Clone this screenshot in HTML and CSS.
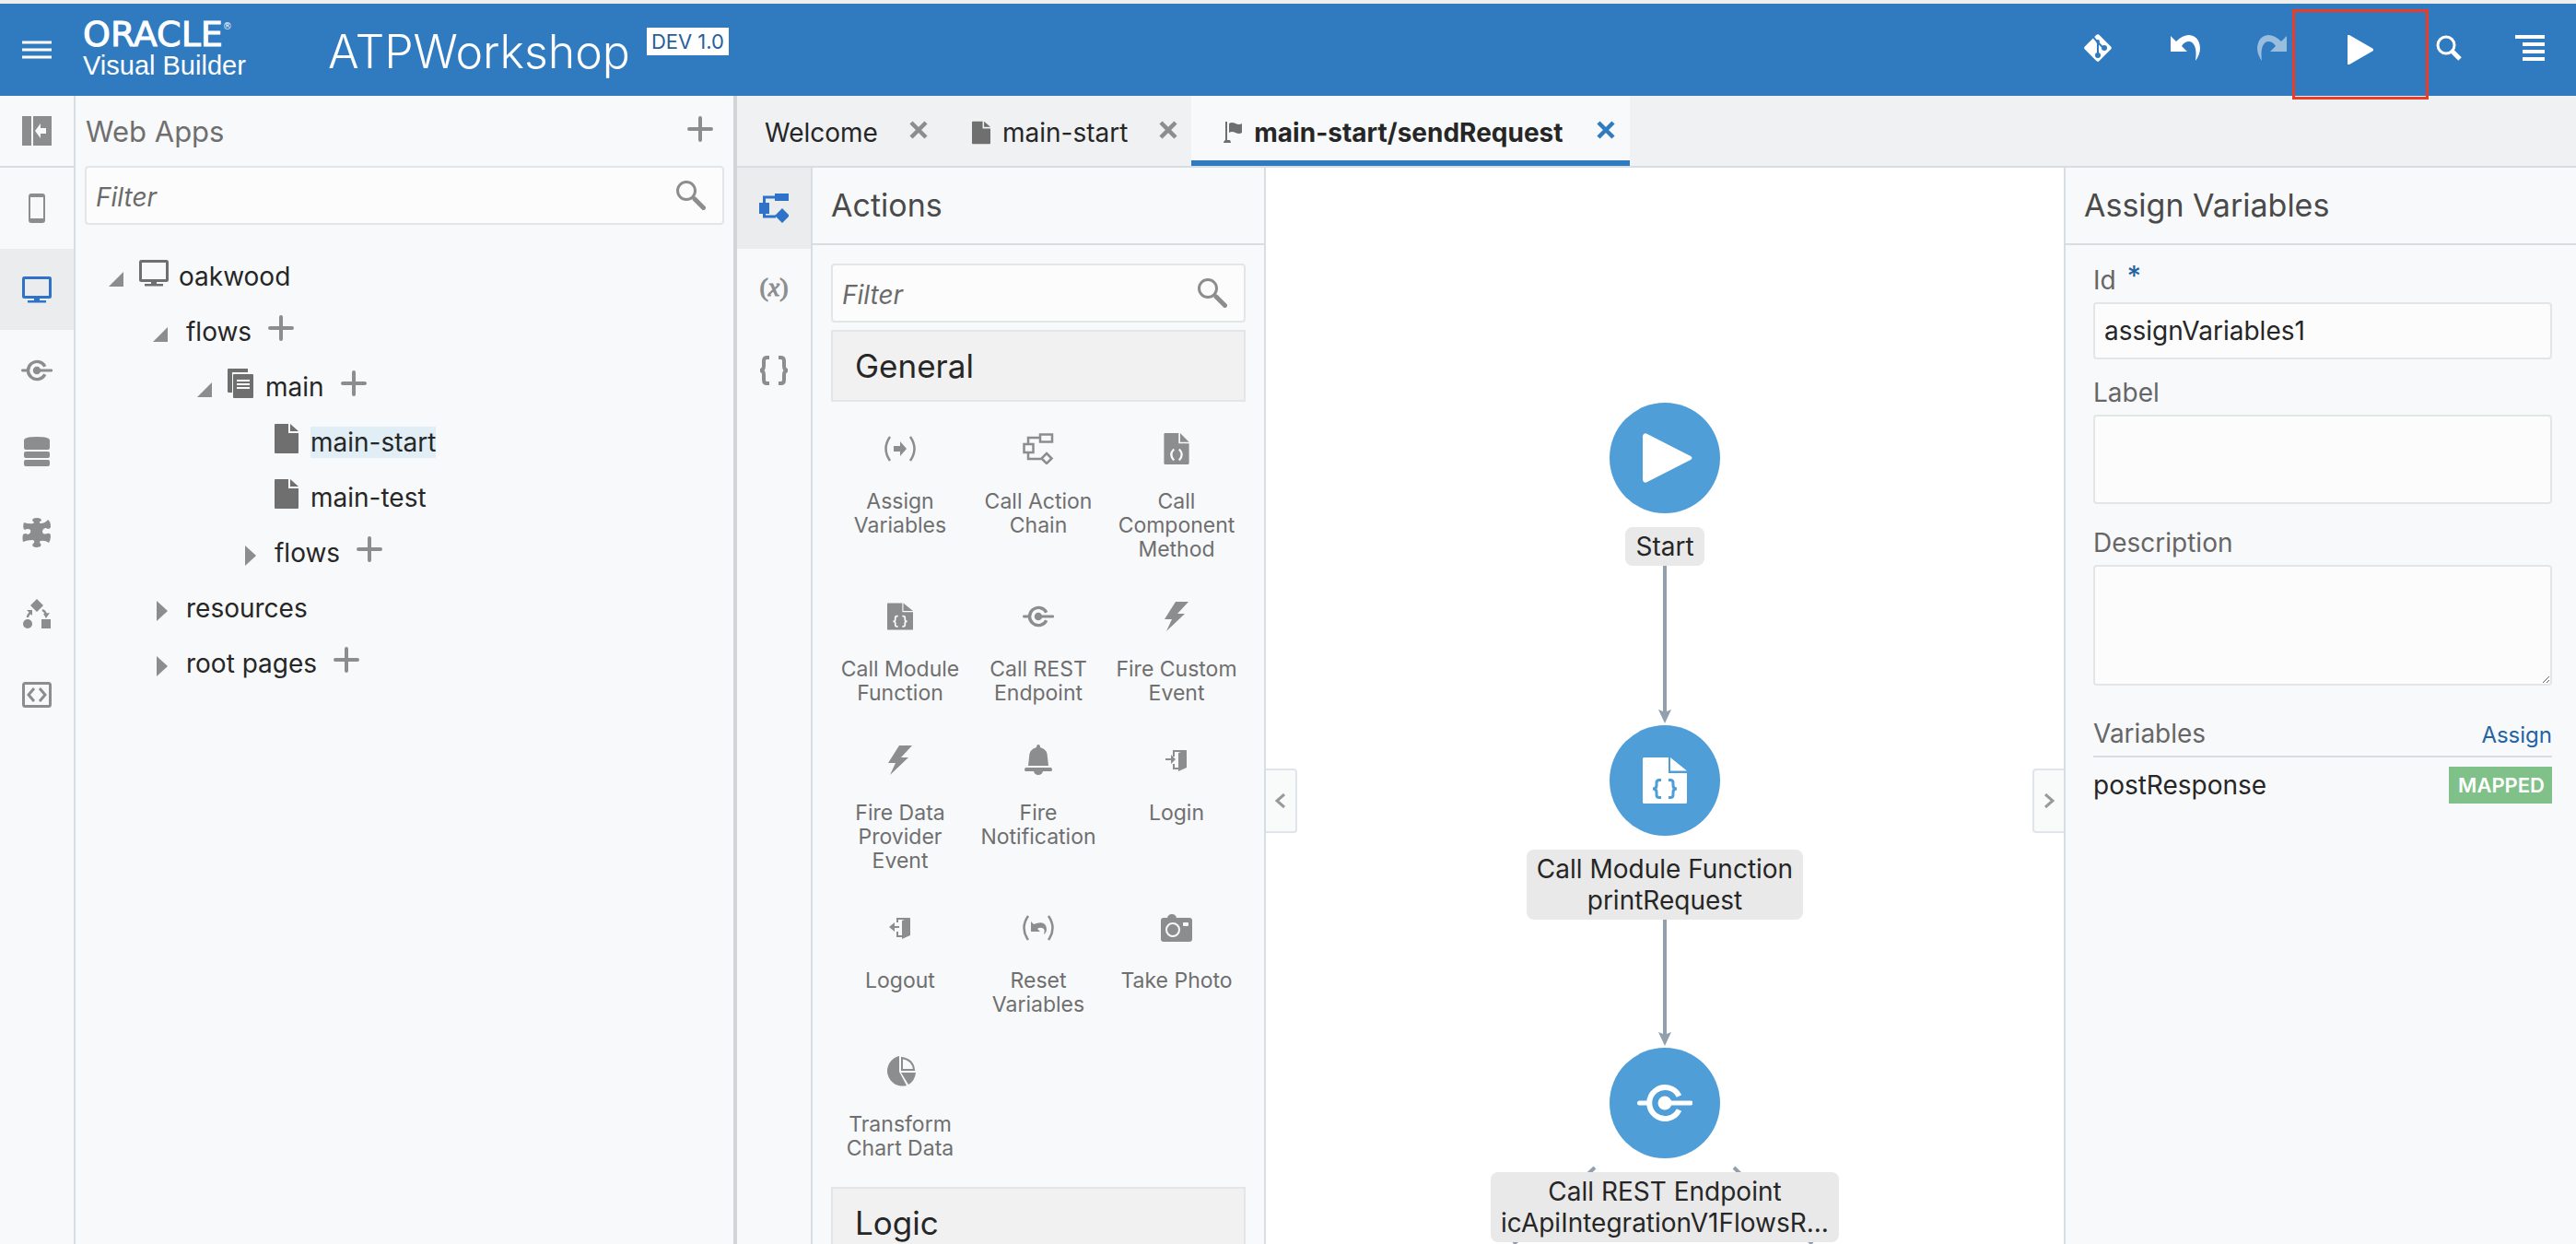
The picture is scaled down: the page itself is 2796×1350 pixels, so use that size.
FILE: index.html
```html
<!DOCTYPE html>
<html lang="en">
<head>
<meta charset="utf-8">
<title>Oracle Visual Builder - ATPWorkshop</title>
<link rel="stylesheet" href="styles.css">
</head>
<body>
<svg class="sprite" aria-hidden="true">
  <symbol id="i-plus" viewBox="0 0 28 28"><path d="M14 2v24M2 14h24" fill="none" stroke="currentColor" stroke-width="4" stroke-linecap="round"/></symbol>
  <symbol id="i-search" viewBox="0 0 32 32"><circle cx="11" cy="11" r="9.5" fill="none" stroke="currentColor" stroke-width="3"/><path d="M20 20l9.500 9.500" stroke="currentColor" stroke-width="5" stroke-linecap="round"/></symbol>
  <symbol id="i-close" viewBox="0 0 20 20"><path d="M2 2l16 16M18 2L2 18" fill="none" stroke="currentColor" stroke-width="4.500"/></symbol>
  <symbol id="i-monitor" viewBox="0 0 32 32"><rect x="1.500" y="3.500" width="29" height="21" rx="1" fill="none" stroke="currentColor" stroke-width="3"/><path d="M13 25h6v3h7v2.500H6V28h7z" fill="currentColor"/></symbol>
  <symbol id="i-endpoint" viewBox="0 0 60 60"><path d="M45.500 22.500A17 17 0 1 0 45.500 37.500" fill="none" stroke="currentColor" stroke-width="6"/><circle cx="30" cy="30" r="7.500" fill="currentColor"/><path d="M32 30h26M2.500 30h10" stroke="currentColor" stroke-width="5" stroke-linecap="round"/></symbol>
  <symbol id="i-page" viewBox="0 0 26 32"><path fill="currentColor" d="M1 0h14v10h11v21q0 1-1 1H1q-1 0-1-1V1q0-1 1-1zM17 0l9 8h-9z"/></symbol>
  <symbol id="i-flow" viewBox="0 0 28 32"><path fill="currentColor" d="M1 0h21v4H5v22H1q-1 0-1-1V1q0-1 1-1zM7 6h20q1 0 1 1v24q0 1-1 1H7q-1 0-1-1V7q0-1 1-1zm3 6v2h14v-2zm0 4v2h14v-2zm0 4v2h14v-2z" fill-rule="evenodd"/></symbol>
  <symbol id="i-braces-page" viewBox="0 0 48 50"><path fill="currentColor" d="M1.500 0H28v17h20v31.500q0 1.500-1.500 1.500h-45Q0 50 0 48.500v-47Q0 0 1.500 0zM30 0l18 14.500H30z"/><path fill="none" stroke="var(--cut)" stroke-width="3" d="M20 24.500h-2q-3 0-3 3v3q0 3.500-4 3.500q4 0 4 3.500v3q0 3 3 3h2M28 24.500h2q3 0 3 3v3q0 3.500 4 3.500q-4 0-4 3.500v3q0 3-3 3h-2"/></symbol>
  <symbol id="i-parens-page" viewBox="0 0 48 60"><path fill="currentColor" d="M2 0h26v20h20v38q0 2-2 2H2q-2 0-2-2V2q0-2 2-2zM31 0l17 17H31z"/><path fill="none" stroke="var(--cut)" stroke-width="4" d="M19 31q-10 10 0 21M29 31q10 10 0 21"/></symbol>
  <symbol id="i-bolt" viewBox="0 0 26 32"><path fill="currentColor" d="M12 0h14L14 13h8L2 32l6-13H0z"/></symbol>
  <symbol id="i-flag" viewBox="0 0 20 24"><path fill="currentColor" d="M2 0h2v20h3q1 2 1 3H0q0-2 2-3zM6 2q3-2 7 0t7 0v10q-3 2-7 0t-7 0z"/></symbol>
  <symbol id="i-undo" viewBox="0 0 32 28"><path fill="currentColor" d="M0 1l6 6Q13 0 20 0Q31 1 32 14Q32 21 27 28Q28 20 27 15Q25 7 20 7Q15 7 12 12l6 6H0z"/></symbol>
</svg>

<header class="topbar">
  <button class="icon-btn menu-btn" aria-label="Menu"><svg width="32" height="20"><path d="M0 2h32M0 10h32M0 18h32" stroke="#fff" stroke-width="3"/></svg></button>
  <div class="brand"><div class="oracle">ORACLE<sup>®</sup></div><div class="product">Visual Builder</div></div>
  <h1 class="app-name">ATPWorkshop</h1>
  <span class="version">DEV 1.0</span>
  <nav class="tools">
    <button class="icon-btn" aria-label="Git"><svg width="34" height="34" viewBox="0 0 34 34"><rect x="6" y="6" width="22" height="22" rx="2" fill="#fff" transform="rotate(45 17 17)"/><path d="M11 4l6 7v13M17 11l6 6" stroke="#307bc0" stroke-width="2" fill="none"/><circle cx="17" cy="10" r="2" fill="#307bc0"/><circle cx="17" cy="25" r="3" fill="#307bc0"/><circle cx="24" cy="17" r="3" fill="#307bc0"/></svg></button>
    <button class="icon-btn" aria-label="Undo"><svg width="32" height="28"><use href="#i-undo"/></svg></button>
    <button class="icon-btn redo" aria-label="Redo" disabled><svg width="32" height="28"><use href="#i-undo"/></svg></button>
    <button class="icon-btn run" aria-label="Run"><svg width="28" height="32"><path d="M0 1q0-2 2-1l26 15q1 1 0 2L2 32q-2 1-2-1z" fill="#fff"/></svg></button>
    <button class="icon-btn find" aria-label="Search"><svg width="28" height="28"><circle cx="11" cy="11" r="9" fill="none" stroke="#fff" stroke-width="3"/><path d="M17 17l9 9" stroke="#fff" stroke-width="5"/></svg></button>
    <button class="icon-btn" aria-label="More"><svg width="32" height="30"><path d="M0 3h32M8 11h24M8 19h24M8 27h24" stroke="#fff" stroke-width="4"/></svg></button>
  </nav>
</header>

<div class="workspace">
  <nav class="rail">
    <button class="rail-btn collapse" aria-label="Collapse"><svg width="32" height="32"><path fill="currentColor" fill-rule="evenodd" d="M0 0h10v32H0zM12 0h20v32H12zM14 16l6-8v5h6v6h-6v5z"/></svg></button>
    <button class="rail-btn" aria-label="Mobile apps"><svg width="18" height="32"><rect x="1" y="1" width="16" height="30" rx="2" fill="none" stroke="currentColor" stroke-width="2"/><path d="M1 1h16v3H1zM1 27h16v4H1z" fill="currentColor"/></svg></button>
    <button class="rail-btn on" aria-label="Web apps"><svg width="32" height="32"><use href="#i-monitor"/></svg></button>
    <button class="rail-btn" aria-label="Services"><svg width="34" height="34"><use href="#i-endpoint"/></svg></button>
    <button class="rail-btn" aria-label="Business objects"><svg width="28" height="32"><path fill="currentColor" d="M0 4q0-4 14-4t14 4v8q0 2-2 2H2q-2 0-2-2zM2 16h24q2 0 2 2v3q0 2-2 2H2q-2 0-2-2v-3q0-2 2-2zM2 25h24q2 0 2 2v3q0 2-2 2H2q-2 0-2-2v-3q0-2 2-2z"/></svg></button>
    <button class="rail-btn" aria-label="Components"><svg width="32" height="32"><path fill="currentColor" d="M11 3Q11 0 16 0T21 3Q17 5 20 6Q25 6 28 2Q31 4 31 9Q31 12 28 12Q24 9 22 14Q22 19 27 17Q31 16 31 20Q31 24 29 27Q25 24 20 25Q18 26 20 28Q21 29 20 31Q15 33 12 31Q10 29 13 27Q14 24 11 24Q6 24 1 26Q0 22 1 18Q4 16 6 18Q10 17 9 13Q6 11 3 13Q0 11 2 5Q7 7 12 6Q14 5 11 3Z"/></svg></button>
    <button class="rail-btn" aria-label="Processes"><svg width="32" height="32"><path fill="currentColor" d="M16 0l7 7-7 7-7-7zM21 22h10v10H21z"/><circle cx="6" cy="27" r="5" fill="currentColor"/><path d="M6 20q0-3 4-6M22 12q4 2 4 6" stroke="currentColor" stroke-width="2.500" fill="none"/><path d="M5 12h6v6zM30 15l-4 6-3-5z" fill="currentColor"/></svg></button>
    <button class="rail-btn" aria-label="Source"><svg width="32" height="28"><rect x="1.500" y="1.500" width="29" height="25" rx="2" fill="none" stroke="currentColor" stroke-width="3"/><path d="M13 7l-6 7 6 7M19 7l6 7-6 7" fill="none" stroke="currentColor" stroke-width="3"/></svg></button>
  </nav>

  <aside class="navigator">
    <div class="nav-head"><h2>Web Apps</h2><button class="icon-btn" aria-label="New web app"><svg width="28" height="28"><use href="#i-plus"/></svg></button></div>
    <div class="filter"><input type="text" placeholder="Filter" aria-label="Filter web apps"><svg width="32" height="32"><use href="#i-search"/></svg></div>
    <ul class="tree">
      <li class="l1"><i class="tri open"></i><svg class="mon" width="32" height="32"><use href="#i-monitor"/></svg><span>oakwood</span></li>
      <li class="l2"><i class="tri open"></i><span>flows</span><button class="icon-btn add" aria-label="Add flow"><svg width="28" height="28"><use href="#i-plus"/></svg></button></li>
      <li class="l3"><i class="tri open"></i><svg width="28" height="32"><use href="#i-flow"/></svg><span>main</span><button class="icon-btn add" aria-label="Add page"><svg width="28" height="28"><use href="#i-plus"/></svg></button></li>
      <li class="l5"><svg width="26" height="32"><use href="#i-page"/></svg><span class="current">main-start</span></li>
      <li class="l5"><svg width="26" height="32"><use href="#i-page"/></svg><span>main-test</span></li>
      <li class="l4"><i class="tri"></i><span>flows</span><button class="icon-btn add" aria-label="Add sub-flow"><svg width="28" height="28"><use href="#i-plus"/></svg></button></li>
      <li class="l2"><i class="tri"></i><span>resources</span></li>
      <li class="l2"><i class="tri"></i><span>root pages</span><button class="icon-btn add" aria-label="Add root page"><svg width="28" height="28"><use href="#i-plus"/></svg></button></li>
    </ul>
  </aside>

  <main class="editor">
    <div class="tabs">
      <div class="tab"><span>Welcome</span><button class="icon-btn" aria-label="Close Welcome"><svg width="20" height="20"><use href="#i-close"/></svg></button></div>
      <div class="tab"><svg class="kind" width="20" height="26"><use href="#i-page"/></svg><span>main-start</span><button class="icon-btn" aria-label="Close main-start"><svg width="20" height="20"><use href="#i-close"/></svg></button></div>
      <div class="tab active"><svg class="kind" width="20" height="24"><use href="#i-flag"/></svg><span>main-start/sendRequest</span><button class="icon-btn" aria-label="Close sendRequest"><svg width="20" height="20"><use href="#i-close"/></svg></button></div>
    </div>
    <div class="panes">
      <nav class="rail sub">
        <button class="rail-btn on" aria-label="Actions"><svg width="32" height="32"><path fill="currentColor" d="M0 10h11v12H0zM17 0h15v8H17zM25 16l8 8-8 8-8-8z"/><path d="M17 4H5.500v21H18" fill="none" stroke="currentColor" stroke-width="3"/></svg></button>
        <button class="rail-btn" aria-label="Variables"><span class="paren">(<em>x</em>)</span></button>
        <button class="rail-btn" aria-label="Code"><svg width="32" height="32"><path d="M11 2H8Q5 2 5 6v5q0 5-4 5q4 0 4 5v5q0 4 3 4h3M21 2h3q3 0 3 4v5q0 5 4 5q-4 0-4 5v5q0 4-3 4h-3" fill="none" stroke="currentColor" stroke-width="4"/></svg></button>
      </nav>
      <section class="actions">
        <h2 class="pane-title">Actions</h2>
        <div class="palette">
          <div class="filter"><input type="text" placeholder="Filter" aria-label="Filter actions"><svg width="32" height="32"><use href="#i-search"/></svg></div>
          <h3 class="group">General</h3>
          <ul class="grid">
            <li><svg width="34" height="34"><path d="M6 4q-9 13 0 26M28 4q9 13 0 26" fill="none" stroke="currentColor" stroke-width="2.500"/><path d="M10 14h7v-5l7 8-7 8v-5h-7z" fill="currentColor"/></svg>Assign Variables</li>
            <li><svg width="34" height="34"><path d="M1.500 12h10v9h-10zM19 1.500h13v8H19zM26 22l5.500 5.500-5.500 5.500-5.500-5.500zM19 5H6v7M6 21v7h14" fill="none" stroke="currentColor" stroke-width="2.500"/></svg>Call Action Chain</li>
            <li><svg width="28" height="34"><use href="#i-parens-page"/></svg>Call Component Method</li>
            <li><svg width="28" height="34"><use href="#i-braces-page"/></svg>Call Module Function</li>
            <li><svg width="34" height="34"><use href="#i-endpoint"/></svg>Call REST Endpoint</li>
            <li><svg width="26" height="32"><use href="#i-bolt"/></svg>Fire Custom Event</li>
            <li><svg width="26" height="32"><use href="#i-bolt"/></svg>Fire Data Provider Event</li>
            <li><svg width="30" height="34"><path fill="currentColor" d="M15 0q2 0 2 3q8 2 8 11l1 9H4l1-9q0-9 8-11q0-3 2-3zM1 25h28q1 1 1 3l-1 1h-9q-1 4-5 4t-5-4H1l-1-1q0-2 1-3z"/></svg>Fire Notification</li>
            <li><svg width="24" height="24"><path d="M9 8V2h13M9 16v5h5M0 11h8" fill="none" stroke="currentColor" stroke-width="2"/><path d="M14 4l9-3v19l-9 4zM6 6l5 5-5 5z" fill="currentColor"/></svg>Login</li>
            <li><svg width="24" height="24"><path d="M9 6V2h13M9 16v5h5M4 11h7" fill="none" stroke="currentColor" stroke-width="2"/><path d="M14 4l9-3v19l-9 4zM6 6l-6 5 6 5z" fill="currentColor"/></svg>Logout</li>
            <li><svg width="34" height="34"><path d="M6 4q-9 13 0 26M28 4q9 13 0 26" fill="none" stroke="currentColor" stroke-width="2.500"/><path d="M9 10l3 3q13-5 14 5 0 4-3 6 2-6-2-7-3-1-5 1l3 3H9z" fill="currentColor"/></svg>Reset Variables</li>
            <li><svg width="34" height="30"><path fill="currentColor" fill-rule="evenodd" d="M3 4h4q1-4 5-4t5 4h14q3 0 3 3v20q0 3-3 3H3q-3 0-3-3V7q0-3 3-3zM25 9q-1 0-1 1v2q0 1 1 1h4q1 0 1-1v-2q0-1-1-1z"/><circle cx="13" cy="17" r="7" fill="none" stroke="#f8f9fb" stroke-width="2"/></svg>Take Photo</li>
            <li><svg width="34" height="34"><path fill="currentColor" d="M16 0v17l8 15A16.500 16.500 0 1 1 16 0zM18 18h16q-1 9-8 13z"/><path d="M19 2v13h13q-1-11-13-13z" fill="none" stroke="currentColor" stroke-width="2"/></svg>Transform Chart Data</li>
          </ul>
          <h3 class="group">Logic</h3>
        </div>
      </section>
      <section class="canvas">
        <button class="handle left" aria-label="Collapse palette"><svg width="12" height="16"><path d="M10 1L2 8l8 7" fill="none" stroke="#999" stroke-width="3"/></svg></button>
        <button class="handle right" aria-label="Collapse properties"><svg width="12" height="16"><path d="M2 1l8 7-8 7" fill="none" stroke="#999" stroke-width="3"/></svg></button>
        <svg class="branches" width="400" height="90"><path d="M124 2L36 85M275 2l85 83" stroke="#929fac" stroke-width="4"/></svg>
        <div class="node"><div class="disc"><svg class="start" width="54" height="60"><path d="M0 6q1-4 5-2l47 24q3 2 0 4L5 56q-4 2-5-2z" fill="#fff"/></svg></div><div class="caption">Start</div><div class="link"></div></div>
        <div class="node"><div class="disc"><svg width="48" height="60" viewBox="0 0 48 60"><use href="#i-braces-page" width="48" height="60"/></svg></div><div class="caption">Call Module Function<br>printRequest</div><div class="link"></div></div>
        <div class="node"><div class="disc"><svg width="60" height="60"><use href="#i-endpoint"/></svg></div><div class="caption">Call REST Endpoint<br>icApiIntegrationV1FlowsR...</div></div>
      </section>
      <aside class="props">
        <h2 class="pane-title">Assign Variables</h2>
        <form class="form">
          <label for="p-id">Id <sup class="req">*</sup></label>
          <input id="p-id" type="text" value="assignVariables1">
          <label for="p-label">Label</label>
          <input id="p-label" class="tall" type="text">
          <label for="p-desc">Description</label>
          <textarea id="p-desc"></textarea>
          <div class="vars-head"><span>Variables</span><a href="#assign">Assign</a></div>
          <div class="vars-row"><span>postResponse</span><b class="badge">MAPPED</b></div>
        </form>
      </aside>
    </div>
  </main>
</div>
</body>
</html>
```
FILE: styles.css
```css
* { box-sizing: border-box; }
:root { --line: #d6dde3; --panel: #f8f9fb; --gray: #8b8d8f; --cut: #f8f9fb; }
html, body { height: 100%; }
body {
  margin: 0; overflow: hidden; display: flex; flex-direction: column;
  background: var(--panel); color: #262626;
  font: 28px/34px Inter, "Liberation Sans", sans-serif;
}
h1, h2, h3, ul { margin: 0; padding: 0; font-weight: 400; }
ul { list-style: none; }
svg { flex: none; display: block; }
button, input, textarea { font: inherit; color: inherit; }
.sprite { position: absolute; width: 0; height: 0; }
.icon-btn { display: flex; padding: 0; border: 0; background: none; color: var(--gray); }

.topbar {
  flex: none; display: flex; align-items: center; height: 104px; padding: 0 34px 0 24px;
  border-top: 4px solid #eeeeee; background: #307bc0; color: #fff;
}
.brand { width: 234px; margin-left: 34px; padding-bottom: 2px; font-family: "Liberation Sans", sans-serif; }
.oracle { font: 38px/36px "DejaVu Sans", sans-serif; -webkit-text-stroke: 1px #fff; white-space: nowrap; }
.oracle sup { font-size: 10px; line-height: 10px; vertical-align: 18px; -webkit-text-stroke: 0; }
.product { font-size: 29px; line-height: 32px; }
.app-name { margin-left: 32px; padding-top: 4px; font-size: 50px; line-height: 72px; font-weight: 300; }
.version { align-self: flex-start; margin: 26px 0 0 18px; padding: 0 5px; background: #fff; color: #265f9b; font-size: 22px; line-height: 30px; }
.tools { display: flex; align-items: center; margin-left: auto; }
.tools .icon-btn { margin: 0 0 4px 62px; color: #fff; }
.tools .redo { opacity: .5; transform: scaleX(-1); }
.tools .run { width: 148px; height: 98px; margin: 10px 0 0 6px; padding-bottom: 10px; align-items: center; justify-content: center; border: 3px solid #ea3c26; position: relative; z-index: 2; }
.tools .find { margin-left: 8px; }
.tools .find + .icon-btn { margin-left: 58px; }

.workspace { flex: 1; min-height: 0; display: flex; }
.rail { flex: none; width: 82px; border-right: 2px solid var(--line); display: flex; flex-direction: column; }
.rail-btn { display: flex; align-items: center; justify-content: center; height: 88px; padding: 0; border: 0; background: none; color: var(--gray); }
.rail-btn.on { background: #ebecee; color: #2f73c9; }
.rail-btn.collapse { height: 78px; border-bottom: 2px solid var(--line); }
.paren { padding-bottom: 4px; font-family: "Liberation Serif", serif; font-size: 28px; -webkit-text-stroke: 1px var(--gray); }

.navigator { flex: none; width: 718px; padding: 0 10px; border-right: 4px solid #d2d5d7; }
.nav-head { display: flex; align-items: center; justify-content: space-between; height: 76px; padding: 0 12px 0 1px; color: #6f6f6f; }
.nav-head h2 { font-size: 31px; line-height: 40px; padding-top: 2px; }
.nav-head .icon-btn { padding-bottom: 4px; }
.filter { display: flex; align-items: center; height: 64px; padding-right: 18px; border: 2px solid #e3e6e7; border-radius: 4px; background: #fcfcfc; color: var(--gray); }
.filter input { flex: 1; min-width: 0; padding: 3px 10px 0; border: 0; outline: 0; background: none; font-style: italic; }
.filter input::placeholder { color: #6b6b6b; opacity: 1; }
.tree { padding-top: 26px; }
.tree li { display: flex; align-items: center; height: 60px; }
.tree span { line-height: 34px; }
.tree svg { color: #6f6f6f; margin: 0 13px 8px 0; }
.tree .mon { margin-right: 11px; }
.tree .add svg { color: var(--gray); margin: 0 0 8px 18px; }
.l1 { padding-left: 26px; }
.l2 { padding-left: 74px; }
.l3 { padding-left: 122px; }
.l4 { padding-left: 170px; }
.l5 { padding-left: 206px; }
.current { background: #e1eef6; }
.tri { flex: none; width: 16px; height: 22px; margin: 6px 20px 0 0; background: var(--gray); clip-path: polygon(25% 0, 100% 50%, 25% 100%); }
.tri.open { height: 16px; clip-path: polygon(100% 0, 100% 100%, 0 100%); }
.l1 .tri, .l3 .tri { margin-right: 17px; }

.editor { flex: 1; min-width: 0; display: flex; flex-direction: column; }
.tabs { flex: none; display: flex; height: 78px; background: #eff1f3; border-bottom: 2px solid var(--line); }
.tab { display: flex; align-items: center; padding: 4px 15px 0 30px; }
.tab .icon-btn { margin-left: 34px; padding-bottom: 6px; }
.tab .kind { margin: 0 13px 0 3px; color: #6f6f6f; }
.tab.active { background: var(--panel); border-bottom: 6px solid #307bc0; padding: 10px 16px 0 32px; font-weight: 700; }
.tab.active .icon-btn { margin-left: 36px; color: #307bc0; }

.panes { flex: 1; min-height: 0; display: flex; }
.actions { flex: none; width: 492px; overflow: hidden; border-right: 2px solid var(--line); }
.pane-title { height: 84px; padding: 0 20px; border-bottom: 2px solid var(--line); font-size: 34px; line-height: 82px; color: #4a4a4a; }
.palette { padding: 20px; }
.group { height: 78px; padding: 0 24px; border: 2px solid #e3e6e7; background: #f1f1f1; font-size: 35px; line-height: 74px; }
.filter + .group { margin-top: 8px; }
.grid { display: grid; grid-template-columns: repeat(3, 1fr); margin-bottom: 20px; font-size: 23px; line-height: 26px; text-align: center; color: #6f6f6f; }
.grid li { padding: 95px 8px 9px; position: relative; }
.grid svg { position: absolute; top: 51px; left: 50%; transform: translate(-50%, -50%); color: var(--gray); }

.canvas { flex: 1; min-width: 0; position: relative; overflow: hidden; padding-top: 255px; background: #fff; }
.handle { position: absolute; top: 652px; width: 34px; height: 70px; display: flex; align-items: center; justify-content: center; padding: 0; border: 2px solid #dfe5ea; background: #f9fbfb; }
.handle.left { left: 0; border-left: 0; border-radius: 0 4px 4px 0; }
.handle.right { right: 0; border-right: 0; border-radius: 4px 0 0 4px; }
.branches { position: absolute; left: 50%; top: 1083px; margin-left: -200px; }
.node { --cut: #4f9ed7; position: relative; height: 350px; display: flex; flex-direction: column; align-items: center; }
.disc { flex: none; width: 120px; height: 120px; border-radius: 50%; background: #4f9ed7; color: #fff; display: flex; align-items: center; justify-content: center; margin-bottom: 15px; }
.disc .start { margin-left: 6px; }
.caption { padding: 4px 11px; border-radius: 8px; background: #e9e9e9; text-align: center; white-space: nowrap; }
.link { flex: 1; width: 14px; margin-bottom: 2px; background: #929fac; clip-path: polygon(5px 0, 9px 0, 9px calc(100% - 13px), 14px calc(100% - 15px), 7px 100%, 0 calc(100% - 15px), 5px calc(100% - 13px)); }

.props { flex: none; width: 556px; border-left: 2px solid var(--line); }
.form { display: flex; flex-direction: column; padding: 21px 26px 0 30px; }
.form label, .vars-head { color: #666; }
.form label { margin-bottom: 7px; }
.req { margin-left: 4px; color: #2464a3; font-size: 30px; font-weight: 500; line-height: 10px; vertical-align: 4px; }
.form input, .form textarea { display: block; width: 100%; height: 62px; margin: 0 0 19px; padding: 0 10px; border: 2px solid #e3e6e7; border-radius: 4px; background: #fcfcfc; outline: 0; }
.form input.tall { height: 97px; margin-bottom: 25px; }
.form textarea { height: 131px; margin-bottom: 35px; resize: vertical; }
.vars-head { display: flex; align-items: baseline; justify-content: space-between; height: 43px; border-bottom: 2px solid var(--line); }
.vars-head a { color: #2464a3; font-size: 24px; text-decoration: none; }
.vars-row { display: flex; align-items: center; justify-content: space-between; margin-top: 10px; }
.badge { padding: 0 8px 0 10px; background: #80c18a; color: #fff; font-size: 22px; line-height: 40px; font-weight: 600; }
```
